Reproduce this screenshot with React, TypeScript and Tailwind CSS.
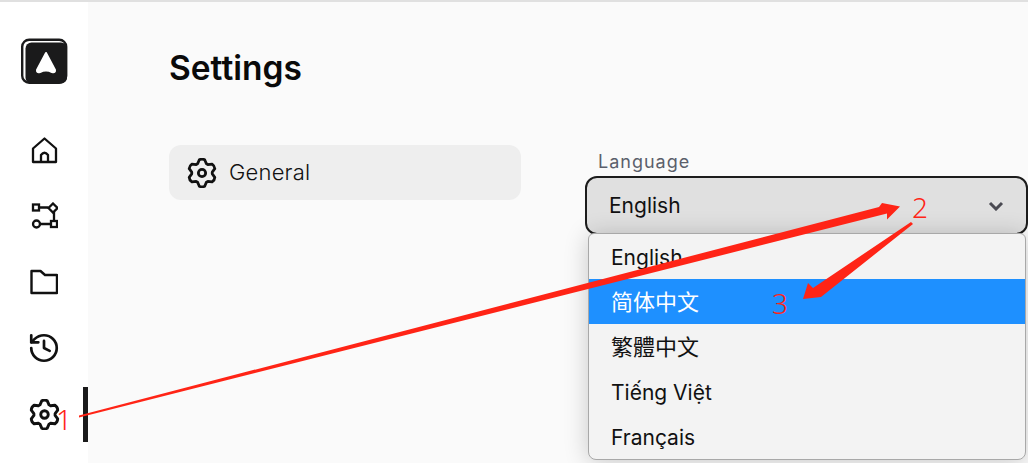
import { History } from "lucide-react";

const languages = ["English", "简体中文", "繁體中文", "Tiếng Việt", "Français"];

// six lobes, one pointing straight up
function gearPath() {
  const pts: string[] = [];
  for (let k = 0; k < 6; k++) {
    const a = (k * Math.PI) / 3 - Math.PI / 2;
    const at = (r: number, d: number) =>
      `${(14 + r * Math.cos(a + d)).toFixed(2)} ${(14 + r * Math.sin(a + d)).toFixed(2)}`;
    pts.push(`${k === 0 ? "M" : "L"}${at(9.6, -0.44)}`);
    pts.push(`L${at(12.6, -0.2)}`);
    pts.push(`Q${at(13.6, 0)} ${at(12.6, 0.2)}`);
    pts.push(`L${at(9.6, 0.44)}`);
  }
  return pts.join(" ") + " Z";
}

function GearIcon({ size }: { size: number }) {
  return (
    <svg width={size} height={size} viewBox="0 0 28 28" fill="none" stroke="#111" strokeWidth="2.6" strokeLinejoin="round">
      <path d={gearPath()} />
      <circle cx="14" cy="14" r="3.4" />
    </svg>
  );
}

function Logo() {
  return (
    <svg width="48" height="46" viewBox="0 0 48 46">
      <rect x="2.2" y="1.7" width="44" height="43" rx="7" fill="#fff" stroke="#1a1a1b" strokeWidth="2.4" />
      <rect x="5.5" y="4.5" width="41.5" height="41" rx="6" fill="#1a1a1b" />
      <path d="M26 15 L35 32 Q35.5 35 32 34 Q26 31 20 34 Q16.5 35 17 32 Z" fill="#fff" stroke="#fff" strokeWidth="2" strokeLinejoin="round" />
    </svg>
  );
}

function HomeIcon() {
  return (
    <svg width="28" height="28" viewBox="0 0 28 28" fill="none" stroke="#111" strokeWidth="2.3" strokeLinejoin="round">
      <path d="M3 12.5 L14.5 2.5 L26 12.5 V26 H3 Z" />
      <path d="M11 26 V19 Q14.5 14.5 18 19 V26" />
    </svg>
  );
}

function RouteIcon() {
  return (
    <svg width="28" height="28" viewBox="0 0 28 28" fill="none" stroke="#111" strokeWidth="2.3">
      <rect x="3" y="2.5" width="6" height="6" />
      <path d="M9 5.5 H18.5 M24 10 V19 M10 22 H21" />
      <path d="M23 1.5 L27.5 6 L23 10.5 L18.5 6 Z" />
      <circle cx="6.5" cy="22" r="3.5" />
      <rect x="21" y="19" width="6" height="6" />
    </svg>
  );
}

function FolderIcon() {
  return (
    <svg className="mt-[1px]" width="28" height="26" viewBox="0 0 28 26" fill="none" stroke="#111" strokeWidth="2.4" strokeLinejoin="round">
      <path d="M1.5 2 H10.5 L15 6 H27 V24 H1.5 Z" />
    </svg>
  );
}

function Annotations() {
  return (
    <svg className="absolute left-0 top-0" width="1028" height="463" viewBox="0 0 1028 463">
      <path d="M79 417.5 L79 415.5 L879 207 L882 203 L900 206.5 L887 219.5 L887 213.5 Z" fill="#ff2416" />
      <path d="M911 222 L913 224 L821 297 L803 299 L808 283 L813 288 Z" fill="#ff2416" />
    </svg>
  );
}

export default function App() {
  return (
    <div className="relative flex h-[463px] w-[1028px] flex-col overflow-hidden bg-white font-['Inter',sans-serif] text-[#111]">
      <div className="h-[2px] bg-[#e0e0e0]" />
      <div className="flex min-h-0 flex-1">
        <aside className="flex w-[88px] shrink-0 flex-col items-center bg-white">
          <div className="ml-[-1px] mt-[36px]">
            <Logo />
          </div>
          <nav className="mt-[52px] flex w-full flex-col items-center gap-[38px]">
            <HomeIcon />
            <RouteIcon />
            <FolderIcon />
            <History size={34} strokeWidth={1.9} className="mb-[-4px] mt-[-2px] text-[#111]" />
            <GearIcon size={31} />
          </nav>
        </aside>
        <div className="absolute left-[83px] top-[387px] h-[55px] w-[5px] bg-[#1a1a1b]" />
        <main className="min-w-0 flex-1 bg-[#fafafa] pl-[81px]">
          <h1 className="mt-[46px] text-[33.5px] font-semibold leading-[40px] text-[#0a0a0a]">Settings</h1>
          <div className="mt-[37px] flex items-start">
            <div className="mt-[20px] flex h-[55px] w-[352px] shrink-0 items-center gap-[12px] rounded-[12px] bg-[#eeeeee] pl-[18px] text-[22px] font-light tracking-[0.2px]">
              <GearIcon size={30} />
              <span>General</span>
            </div>
            <div className="relative ml-[64px] mt-[21px] w-[443px] shrink-0">
              <div className="pl-[13px] pt-[2px] text-[18px] leading-[28px] tracking-[1px] text-[#5b5f6b]">Language</div>
              <div className="flex h-[59px] items-center justify-between rounded-[12px] border-2 border-[#1c1c1c] bg-[#e0e0e0] pl-[22px] pr-[22px] text-[21px]">
                <span>English</span>
                <svg width="16" height="10" viewBox="0 0 16 10" fill="none" stroke="#4a4a52" strokeWidth="3">
                  <path d="M2 2 L8 8 L14 2" />
                </svg>
              </div>
              <ul className="absolute left-[3px] top-[87px] w-[438px] overflow-hidden rounded-b-[8px] rounded-t-[6px] border border-[#a8a8a8] bg-[#f3f3f3] text-[21px] shadow-[0_2px_24px_rgba(0,0,0,0.2)]">
                {languages.map((lang, i) => (
                  <li
                    key={lang}
                    className={
                      i === 1
                        ? "flex h-[45px] items-center bg-[#1e90ff] pl-[22px] pt-[2px] font-['Inter','Noto_Sans_CJK_SC',sans-serif] text-[22px] text-white"
                        : i === 2
                          ? "flex h-[45px] items-center pl-[22px] pt-[2px] font-['Inter','Noto_Sans_CJK_TC',sans-serif] text-[22px]"
                          : "flex h-[45px] items-center pl-[22px] pt-[2px]"
                    }
                  >
                    {lang}
                  </li>
                ))}
              </ul>
            </div>
          </div>
        </main>
      </div>
      <Annotations />
      <span className="absolute left-[56px] top-[400px] font-['Noto_Sans',sans-serif] text-[28px] font-light leading-[38px] text-[#ff2416]">1</span>
      <span className="absolute left-[912px] top-[188px] font-['Noto_Sans',sans-serif] text-[28px] font-light leading-[38px] text-[#ff2416]">2</span>
      <span className="absolute left-[772px] top-[284px] font-['Noto_Sans',sans-serif] text-[28px] font-light leading-[38px] text-[#ff2416]">3</span>
    </div>
  );
}
